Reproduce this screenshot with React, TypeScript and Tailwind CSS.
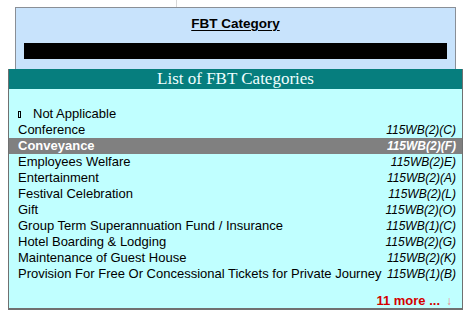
const rows: { name: string; code: string; selected?: boolean }[] = [
  { name: "Conference", code: "115WB(2)(C)" },
  { name: "Conveyance", code: "115WB(2)(F)", selected: true },
  { name: "Employees Welfare", code: "115WB(2)E)" },
  { name: "Entertainment", code: "115WB(2)(A)" },
  { name: "Festival Celebration", code: "115WB(2)(L)" },
  { name: "Gift", code: "115WB(2)(O)" },
  { name: "Group Term Superannuation Fund / Insurance", code: "115WB(1)(C)" },
  { name: "Hotel Boarding & Lodging", code: "115WB(2)(G)" },
  { name: "Maintenance of Guest House", code: "115WB(2)(K)" },
  { name: "Provision For Free Or Concessional Tickets for Private Journey", code: "115WB(1)(B)" },
];

export default function App() {
  return (
    <div className="w-[473px] h-[318px] bg-white overflow-hidden font-['Liberation_Sans',Arial,sans-serif] text-black">
      <div className="flex h-[7px]">
        <div className="ml-[176px] w-px h-[7px] bg-[#d8d8d8]" />
      </div>
      {/* top form panel */}
      <div className="ml-[15px] w-[441px] h-[62px] bg-[#c8e3fc] border border-b-0 border-[#8a8f96] flex flex-col items-center">
        <div className="mt-[9px] text-[13.5px] font-bold leading-[14px] underline underline-offset-2">FBT Category</div>
        <div className="mt-[12px] w-[423px] h-[16px] bg-black" />
      </div>
      {/* list popup */}
      <div className="ml-[8px] w-[455px] h-[241px] flex flex-col border-l border-r border-b-2 border-[#707070] bg-[#c0ffff]">
        <div className="h-[20px] bg-[#067e7e] text-[#f0ffff] text-center text-[17px] leading-[20px] font-['Liberation_Serif','Times_New_Roman',serif]">
          List of FBT Categories
        </div>
        <div className="mt-[17px] flex flex-col">
          <div className="h-[16px] flex items-center pl-[9px] text-[13px] leading-[16px]">
            <span className="w-[3px] h-[7px] border border-black mr-[12px]" />
            Not Applicable
          </div>
          {rows.map((r) => (
            <div
              key={r.name}
              className={`h-[16px] flex items-center justify-between pl-[9px] pr-[6px] leading-[16px] ${
                r.selected ? "bg-[#808080] text-white font-bold" : ""
              }`}
            >
              <span className="text-[13px] whitespace-nowrap">{r.name}</span>
              <span className="text-[12px] italic whitespace-nowrap">{r.code}</span>
            </div>
          ))}
          <div className="mt-[11px] h-[16px] flex items-center justify-end pr-[10px] text-[13px] font-bold text-[#d40000]">
            11 more ...
            <span className="ml-[6px] font-normal text-[#f08080] text-[12px]">↓</span>
          </div>
        </div>
      </div>
    </div>
  );
}
